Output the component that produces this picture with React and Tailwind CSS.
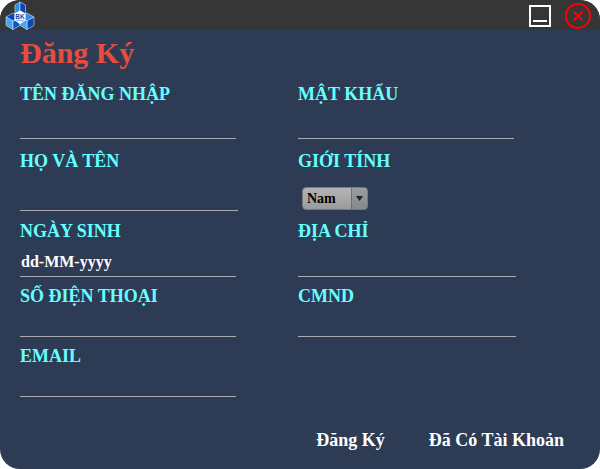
import React from "react";

function Logo() {
  return (
    <svg width="30" height="30" viewBox="0 0 30 30" aria-hidden="true">
      <g stroke="#c9e2f8" strokeWidth="0.600" strokeLinejoin="round">
        <path d="M15 2 L10 5 V14 L15 11 Z" fill="#2f8fe8" />
        <path d="M15 2 L20.500 5 V14 L15 11 Z" fill="#0a45b8" />
        <path d="M1 17 L8 13 L10 14 V20 L8 21 Z" fill="#0a45b8" />
        <path d="M1 17 L8 21 V29.500 L1 25.500 Z" fill="#4ba3ee" />
        <path d="M8 21 L10 20 L15 23 V25.500 L8 29.500 Z" fill="#0b55cc" />
        <path d="M29 17 L22 13 L20 14 V20 L22 21 Z" fill="#2f8fe8" />
        <path d="M22 21 L29 17 V25.500 L22 29.500 Z" fill="#0a45b8" />
        <path d="M22 21 L20 20 L15 23 V25.500 L22 29.500 Z" fill="#4ba3ee" />
      </g>
      <path d="M15 10.500 L20.500 13.500 V20.500 L15 24 L9.500 20.500 V13.500 Z" fill="#ffffff" />
      <text x="15" y="18.500" textAnchor="middle" fontSize="6.500" fontWeight="700" fill="#17499f" fontFamily="Liberation Sans, sans-serif">BK</text>
      <path d="M11 20.500 H19" stroke="#8fc0ef" strokeWidth="1.500" />
    </svg>
  );
}

function Field({ id, label, type = "text", size, width = "w-[216px]", space = "", placeholder }) {
  return (
    <div className={`flex flex-col ${space}`}>
      <label htmlFor={id} className="text-lg leading-6 font-bold text-[#66ffff]">
        {label}
      </label>
      <input
        id={id}
        type={type}
        placeholder={placeholder}
        className={`${size} ${width} max-w-full border-b border-[#a9abae] bg-transparent pt-1 pl-px text-base font-bold text-white outline-none placeholder:text-white placeholder:opacity-100`}
      />
    </div>
  );
}

export default function App() {
  return (
    <div className="min-h-screen bg-white font-['Liberation_Serif',serif]">
      <main className="flex min-h-screen flex-col overflow-hidden rounded-[20px] bg-[#2e3b55]">
        <header className="flex h-[30px] shrink-0 items-center justify-between bg-[#363636] pr-2 pl-[5px]">
          <Logo />
          <div className="flex items-center gap-3">
            <button type="button" aria-label="Thu nhỏ">
              <svg width="24" height="24" viewBox="0 0 24 24" fill="none" stroke="#ffffff" strokeWidth="2" className="block">
                <path d="M2 3 H22 V23 H2 Z M5 18 H19" />
              </svg>
            </button>
            <button type="button" aria-label="Đóng">
              <svg width="28" height="28" viewBox="0 0 28 28" fill="none" stroke="#fb0007" strokeWidth="2" className="block">
                <circle cx="14" cy="15" r="12" />
                <path d="M9.500 10.500 L18.500 19.500 M18.500 10.500 L9.500 19.500" />
              </svg>
            </button>
          </div>
        </header>

        <form className="flex flex-1 flex-col pl-5" onSubmit={(e) => e.preventDefault()}>
          <h1 className="mt-1 text-3xl leading-[38px] font-bold text-[#e74c3c]">Đăng Ký</h1>

          <div className="mt-[10px] grid grid-cols-[278px_1fr] gap-y-[7px]">
            <Field id="username" label="TÊN ĐĂNG NHẬP" size="h-[33px]" />
            <Field id="password" label="MẬT KHẨU" type="password" size="h-[33px]" />

            <Field id="fullname" label="HỌ VÀ TÊN" size="h-[38px]" width="w-[218px]" space="mt-[3px]" />
            <div className="mt-[3px] flex flex-col">
              <label htmlFor="gender" className="text-lg leading-6 font-bold text-[#66ffff]">
                GIỚI TÍNH
              </label>
              <div className="mt-[14px] ml-1 grid w-[66px]">
                <select
                  id="gender"
                  className="col-start-1 row-start-1 h-[23px] appearance-none rounded-[4px] border border-[#77797d] bg-linear-to-b from-[#b4b4b4] to-[#999b9e] pl-1 text-sm font-bold text-black"
                >
                  <option>Nam</option>
                  <option>Nữ</option>
                </select>
                <span className="pointer-events-none col-start-1 row-start-1 my-px mr-px flex w-4 items-center justify-center justify-self-end rounded-r-[3px] border-l border-[#6b7076] bg-linear-to-b from-[#9b9c9e] to-[#85888c]">
                  <svg width="7" height="5" viewBox="0 0 7 5" aria-hidden="true">
                    <path d="M0 0 H7 L3.500 5 Z" fill="#202225" />
                  </svg>
                </span>
              </div>
            </div>

            <Field id="birthday" label="NGÀY SINH" size="h-[34px]" space="mt-px" placeholder="dd-MM-yyyy" />
            <Field id="address" label="ĐỊA CHỈ" size="h-[34px]" width="w-[218px]" space="mt-px" />

            <Field id="phone" label="SỐ ĐIỆN THOẠI" type="tel" size="h-[29px]" />
            <Field id="idcard" label="CMND" size="h-[29px]" width="w-[218px]" />

            <Field id="email" label="EMAIL" type="email" size="h-[29px]" />
          </div>

          <div className="mt-auto mb-[17px] flex justify-end gap-11 pr-9 text-lg leading-6 font-bold text-white">
            <button type="submit">Đăng Ký</button>
            <button type="button">Đã Có Tài Khoản</button>
          </div>
        </form>
      </main>
    </div>
  );
}
